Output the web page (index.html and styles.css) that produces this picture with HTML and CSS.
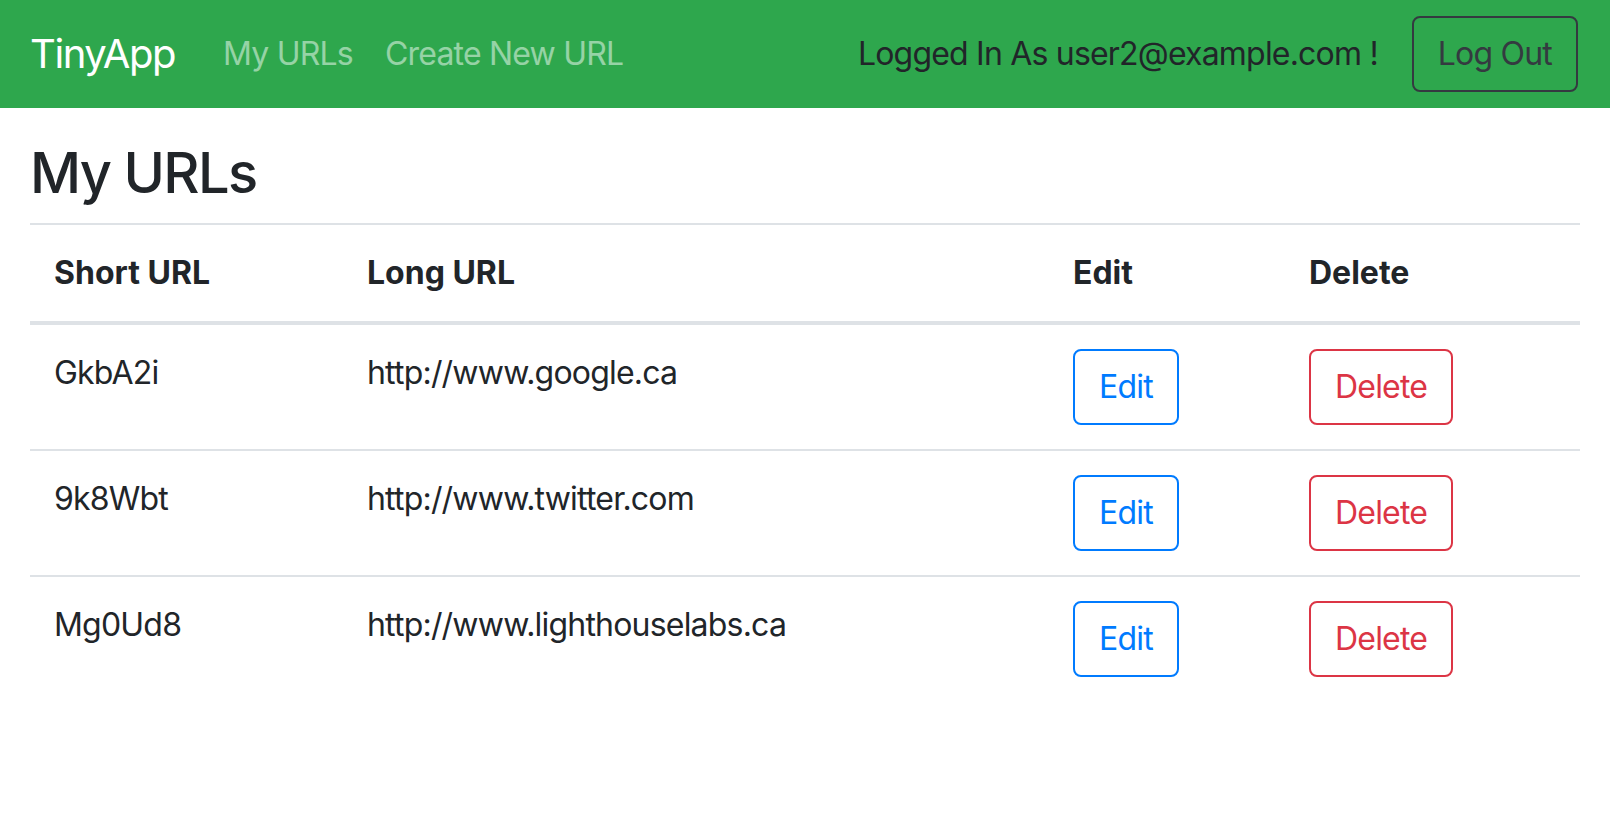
FILE: index.html
```html
<!DOCTYPE html>
<html lang="en">
<head>
<meta charset="utf-8">
<title>TinyApp</title>
<link rel="stylesheet" href="styles.css">
</head>
<body>
<nav class="navbar">
  <a class="brand" href="#">TinyApp</a>
  <ul class="nav-links">
    <li><a class="nav-link" href="#">My URLs</a></li>
    <li><a class="nav-link" href="#">Create New URL</a></li>
  </ul>
  <div class="nav-right">
    <span class="user-text">Logged In As user2@example.com !</span>
    <button class="btn btn-outline-dark" type="button">Log Out</button>
  </div>
</nav>
<main class="container">
  <h3 class="page-title">My URLs</h3>
  <table class="url-table">
    <colgroup>
      <col class="col-short">
      <col class="col-long">
      <col class="col-edit">
      <col class="col-delete">
    </colgroup>
    <thead>
      <tr>
        <th>Short URL</th>
        <th>Long URL</th>
        <th>Edit</th>
        <th>Delete</th>
      </tr>
    </thead>
    <tbody>
      <tr>
        <td>GkbA2i</td>
        <td>http://www.google.ca</td>
        <td><button class="btn btn-outline-primary" type="button">Edit</button></td>
        <td><button class="btn btn-outline-danger" type="button">Delete</button></td>
      </tr>
      <tr>
        <td>9k8Wbt</td>
        <td>http://www.twitter.com</td>
        <td><button class="btn btn-outline-primary" type="button">Edit</button></td>
        <td><button class="btn btn-outline-danger" type="button">Delete</button></td>
      </tr>
      <tr>
        <td>Mg0Ud8</td>
        <td>http://www.lighthouselabs.ca</td>
        <td><button class="btn btn-outline-primary" type="button">Edit</button></td>
        <td><button class="btn btn-outline-danger" type="button">Delete</button></td>
      </tr>
    </tbody>
  </table>
</main>
</body>
</html>
```

FILE: styles.css
```css
* {
  box-sizing: border-box;
}

body {
  margin: 0;
  font-family: Inter, "Liberation Sans", sans-serif;
  font-size: 32px;
  line-height: 48px;
  letter-spacing: -0.025em;
  color: #212529;
  background: #ffffff;
}

.navbar {
  display: flex;
  align-items: center;
  padding: 16px 32px 16px 30px;
  background: #2ea74d;
}

.brand {
  font-size: 40px;
  line-height: 60px;
  letter-spacing: -0.035em;
  color: #ffffff;
  text-decoration: none;
  margin-right: 32px;
}

.nav-links {
  display: flex;
  list-style: none;
  margin: 0;
  padding: 0;
}

.nav-link {
  display: block;
  padding: 0 16px;
  color: rgba(255, 255, 255, 0.5);
  text-decoration: none;
}

.nav-right {
  margin-left: auto;
  display: flex;
  align-items: center;
  gap: 34px;
}

.user-text {
  color: #212529;
}

.btn {
  display: inline-block;
  font-family: inherit;
  font-size: 32px;
  line-height: 48px;
  letter-spacing: -0.025em;
  padding: 12px 24px;
  border: 2px solid transparent;
  border-radius: 8px;
  background: transparent;
  cursor: pointer;
}

.btn-outline-dark {
  color: #343a40;
  border-color: #343a40;
}

.btn-outline-primary {
  color: #007bff;
  border-color: #007bff;
}

.btn-outline-danger {
  color: #dc3545;
  border-color: #dc3545;
}

.container {
  padding: 32px 30px 0;
}

.page-title {
  margin: 0 0 16px;
  font-size: 56px;
  line-height: 67px;
  font-weight: 500;
  letter-spacing: -0.03em;
}

.url-table {
  width: 100%;
  border-collapse: collapse;
  table-layout: fixed;
}

.col-short { width: 313px; }
.col-long { width: 706px; }
.col-edit { width: 236px; }

.url-table th {
  text-align: left;
  font-weight: 700;
  letter-spacing: 0;
  padding: 24px;
  vertical-align: bottom;
  border-top: 2px solid #dee2e6;
  border-bottom: 4px solid #dee2e6;
}

.url-table td {
  padding: 24px;
  vertical-align: top;
  border-top: 2px solid #dee2e6;
}
```
